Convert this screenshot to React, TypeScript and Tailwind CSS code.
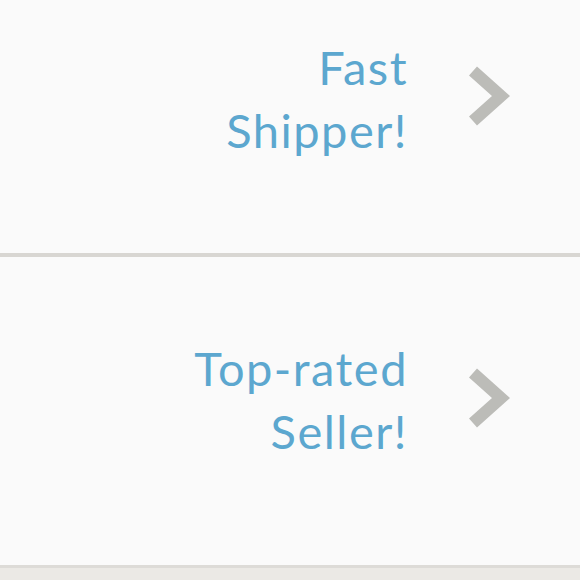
import React from "react";

function Chevron() {
  return (
    <svg width="44" height="62" viewBox="0 0 44 62" className="shrink-0">
      <path d="M7 6 L35 31 L7 56" fill="none" stroke="#bcbcb8" strokeWidth="12" strokeLinejoin="miter" />
    </svg>
  );
}

function Row({ lines, className, chevTop }: { lines: string[]; className: string; chevTop: string }) {
  return (
    <div className={`flex items-start justify-end ${className}`}>
      <div
        className="text-right text-[47px] leading-[63px] text-[#5ca7cf] tracking-[1.5px]"
        style={{ fontFamily: "Lato, 'Open Sans', sans-serif" }}
      >
        {lines.map((l) => (
          <div key={l}>{l}</div>
        ))}
      </div>
      <div className={`ml-[58px] mr-[70px] ${chevTop}`}>
        <Chevron />
      </div>
    </div>
  );
}

export default function App() {
  return (
    <div className="w-[580px] h-[580px] overflow-hidden bg-[#ebe9e5] flex flex-col">
      <Row lines={["Fast", "Shipper!"]} chevTop="mt-[29px]" className="h-[253px] pt-[36px] bg-[#fafafa] shrink-0" />
      <div className="h-[4px] bg-[#d8d6d2] shrink-0" />
      <Row lines={["Top-rated", "Seller!"]} chevTop="mt-[30px]" className="h-[311px] pt-[80px] bg-[#fafafa] shrink-0 border-b-[3px] border-[#dddbd7]" />
    </div>
  );
}
